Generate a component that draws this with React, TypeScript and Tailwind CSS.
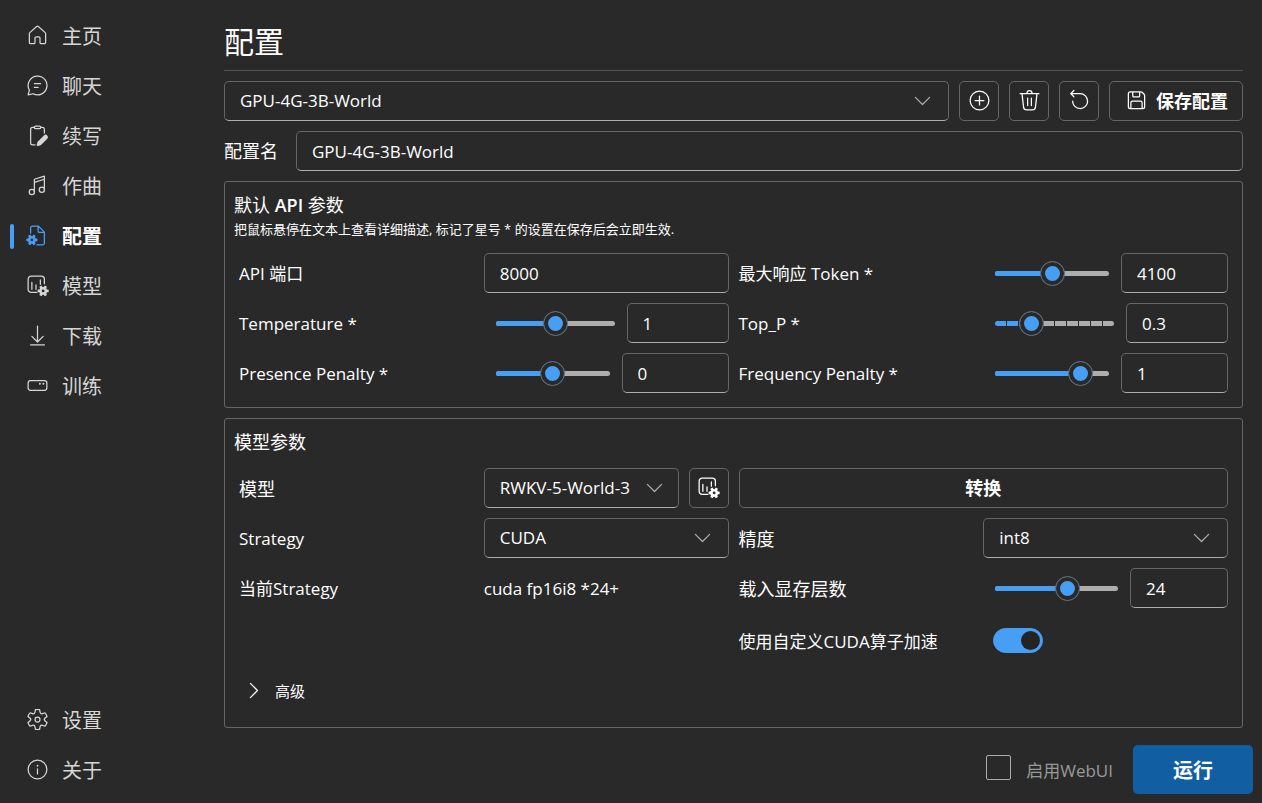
import { useState, type ReactNode } from "react";

type IconProps = { className?: string };

function Icon({ children, className = "" }: { children: ReactNode; className?: string }) {
  return (
    <svg viewBox="0 0 20 20" aria-hidden="true" className={`mb-px size-[25px] shrink-0 ${className}`}>
      {children}
    </svg>
  );
}

function Lines({ d }: { d: string }) {
  return <path d={d} fill="none" stroke="currentColor" strokeLinecap="round" strokeLinejoin="round" />;
}

function SmallGear({ x, y }: { x: number; y: number }) {
  return (
    <g transform={`translate(${x} ${y})`}>
      {[0, 60, 120].map((angle) => (
        <rect key={angle} x="-1.1" y="-4.4" width="2.2" height="8.8" rx="0.5" fill="currentColor" transform={`rotate(${angle + 30})`} />
      ))}
      <circle r="2.1" fill="none" stroke="currentColor" strokeWidth="2" />
      <circle r="1.1" fill="#292929" />
    </g>
  );
}

const HomeIcon = (p: IconProps) => (
  <Icon {...p}>
    <path
      fill="currentColor"
      d="M9 2.39a1.5 1.5 0 0 1 2 0l5.5 4.94c.32.28.5.69.5 1.12v7.05c0 .83-.67 1.5-1.5 1.5H13a1.5 1.5 0 0 1-1.5-1.5V12a.5.5 0 0 0-.5-.5H9a.5.5 0 0 0-.5.5v3.5c0 .83-.67 1.5-1.5 1.5H4.5A1.5 1.5 0 0 1 3 15.5V8.45c0-.43.18-.84.5-1.12L9 2.39Zm1.33.74a.5.5 0 0 0-.66 0l-5.5 4.94a.5.5 0 0 0-.17.38v7.05c0 .28.22.5.5.5H7a.5.5 0 0 0 .5-.5V12c0-.83.67-1.5 1.5-1.5h2c.83 0 1.5.67 1.5 1.5v3.5c0 .28.22.5.5.5h2.5a.5.5 0 0 0 .5-.5V8.45a.5.5 0 0 0-.17-.38l-5.5-4.94Z"
    />
  </Icon>
);

const ChatIcon = (p: IconProps) => (
  <Icon {...p}>
    <Lines d="M10 2.5a7.5 7.5 0 1 1-3.5 14.1l-4 .9 1-3.8A7.5 7.5 0 0 1 10 2.5ZM7.5 8.5h5M7.5 11.5h3" />
  </Icon>
);

const ClipboardEditIcon = (p: IconProps) => (
  <Icon {...p}>
    <Lines d="M7.5 3.5H6A1.5 1.5 0 0 0 4.5 5v11A1.5 1.5 0 0 0 6 17.5h2M12.5 3.5H14A1.5 1.5 0 0 1 15.5 5v3" />
    <rect x="7.5" y="2.5" width="5" height="2" rx="1" fill="none" stroke="currentColor" />
    <path
      fill="currentColor"
      d="m10.3 14.7 4.8-4.8a1.87 1.87 0 0 1 2.7 2.7l-4.8 4.8c-.3.3-.6.5-1 .6l-1.5.4a.9.9 0 0 1-1.1-1.1l.4-1.5c.1-.4.2-.8.5-1.1Z"
    />
  </Icon>
);

const MusicIcon = (p: IconProps) => (
  <Icon {...p}>
    <Lines d="M7.5 15V5l8-2.5v10.7M7.5 7.5l8-2.5" />
    <circle cx="5.5" cy="15.2" r="2.1" fill="none" stroke="currentColor" />
    <circle cx="13.5" cy="13.3" r="2.1" fill="none" stroke="currentColor" />
  </Icon>
);

const DocumentSettingsIcon = (p: IconProps) => (
  <Icon {...p}>
    <Lines d="M4.5 8V4A1.5 1.5 0 0 1 6 2.5h4.7L15.5 7.3V16a1.5 1.5 0 0 1-1.5 1.5h-4.5M10.5 2.5V6.5a1 1 0 0 0 1 1h4" />
    <SmallGear x={5.5} y={13.5} />
  </Icon>
);

const DataSettingsIcon = (p: IconProps) => (
  <Icon {...p}>
    <Lines d="M9.5 15.5H5A2.5 2.5 0 0 1 2.5 13V5A2.5 2.5 0 0 1 5 2.5h8A2.5 2.5 0 0 1 15.5 5v3.5M5.5 7.5V13M8.8 9.5V13M12.3 5.5v3.5" />
    <SmallGear x={14.5} y={14.3} />
  </Icon>
);

const DownloadIcon = (p: IconProps) => (
  <Icon {...p}>
    <Lines d="M4.5 17.5h11M10 2.5V15M5.5 10.7 10 15.2l4.5-4.5" />
  </Icon>
);

const DriveIcon = (p: IconProps) => (
  <Icon {...p}>
    <rect x="2.5" y="6" width="15" height="7.8" rx="2" fill="none" stroke="currentColor" />
    <circle cx="11.9" cy="8.6" r="0.8" fill="currentColor" />
    <circle cx="14.7" cy="8.6" r="0.8" fill="currentColor" />
  </Icon>
);

const SettingsIcon = (p: IconProps) => (
  <Icon {...p}>
    <path
      fill="currentColor"
      d="M1.91 7.38A8.5 8.5 0 0 1 3.7 4.3a.5.5 0 0 1 .54-.13l1.92.68a1 1 0 0 0 1.32-.76l.36-2a.5.5 0 0 1 .4-.4 8.53 8.53 0 0 1 3.55 0c.2.04.35.2.38.4l.37 2a1 1 0 0 0 1.32.76l1.92-.68a.5.5 0 0 1 .54.13 8.5 8.5 0 0 1 1.78 3.08c.06.2 0 .4-.15.54l-1.56 1.32a1 1 0 0 0 0 1.52l1.56 1.32a.5.5 0 0 1 .15.54 8.5 8.5 0 0 1-1.78 3.08.5.5 0 0 1-.54.13l-1.92-.68a1 1 0 0 0-1.32.76l-.37 2a.5.5 0 0 1-.38.4 8.53 8.53 0 0 1-3.56 0 .5.5 0 0 1-.39-.4l-.36-2a1 1 0 0 0-1.32-.76l-1.92.68a.5.5 0 0 1-.54-.13 8.5 8.5 0 0 1-1.78-3.08.5.5 0 0 1 .15-.54l1.56-1.32a1 1 0 0 0 0-1.52L2.06 7.92a.5.5 0 0 1-.15-.54Zm1.06 0 1.3 1.1a2 2 0 0 1 0 3.04l-1.3 1.1c.3.79.72 1.51 1.25 2.16l1.6-.58a2 2 0 0 1 2.63 1.53l.3 1.67a7.56 7.56 0 0 0 2.5 0l.3-1.67a2 2 0 0 1 2.64-1.53l1.6.57a7.5 7.5 0 0 0 1.24-2.15l-1.3-1.1a2 2 0 0 1 0-3.05l1.3-1.1a7.5 7.5 0 0 0-1.25-2.15l-1.6.57a2 2 0 0 1-2.63-1.52l-.3-1.68a7.55 7.55 0 0 0-2.5 0l-.3 1.68A2 2 0 0 1 5.81 5.8l-1.6-.57a7.5 7.5 0 0 0-1.24 2.15ZM7.5 10a2.5 2.5 0 1 1 5 0 2.5 2.5 0 0 1-5 0Zm1 0a1.5 1.5 0 1 0 3 0 1.5 1.5 0 0 0-3 0Z"
    />
  </Icon>
);

const InfoIcon = (p: IconProps) => (
  <Icon {...p}>
    <circle cx="10" cy="10" r="7.5" fill="none" stroke="currentColor" />
    <Lines d="M10 9.5v4" />
    <circle cx="10" cy="7" r="0.75" fill="currentColor" />
  </Icon>
);

const AddIcon = (p: IconProps) => (
  <Icon {...p}>
    <circle cx="10" cy="10" r="7.5" fill="none" stroke="currentColor" />
    <Lines d="M10 6.5v7M6.5 10h7" />
  </Icon>
);

const DeleteIcon = (p: IconProps) => (
  <Icon {...p}>
    <path
      fill="currentColor"
      d="M8.5 4h3a1.5 1.5 0 0 0-3 0Zm-1 0a2.5 2.5 0 0 1 5 0h5a.5.5 0 0 1 0 1h-1.05l-1.2 10.34A3 3 0 0 1 12.27 18H7.73a3 3 0 0 1-2.98-2.66L3.55 5H2.5a.5.5 0 0 1 0-1h5ZM5.74 15.23A2 2 0 0 0 7.73 17h4.54a2 2 0 0 0 1.99-1.77L15.44 5H4.56l1.18 10.23ZM8.5 7.5c.28 0 .5.22.5.5v6a.5.5 0 0 1-1 0V8c0-.28.22-.5.5-.5ZM12 8a.5.5 0 0 0-1 0v6a.5.5 0 0 0 1 0V8Z"
    />
  </Icon>
);

const ResetIcon = (p: IconProps) => (
  <Icon {...p}>
    <Lines d="M3 4.5h7.5a6 6 0 1 1-6 6M5.5 2 3 4.5 5.5 7" />
  </Icon>
);

const SaveIcon = (p: IconProps) => (
  <Icon {...p}>
    <Lines d="M5 3h8.4a1.5 1.5 0 0 1 1.06.44l1.6 1.6a1.5 1.5 0 0 1 .44 1.06V15a1.5 1.5 0 0 1-1.5 1.5H5A1.5 1.5 0 0 1 3.5 15V4.5A1.5 1.5 0 0 1 5 3ZM7 3v3.3a.7.7 0 0 0 .7.7h4.1a.7.7 0 0 0 .7-.7V3M5.5 16.5v-4.8a1.2 1.2 0 0 1 1.2-1.2h6.6a1.2 1.2 0 0 1 1.2 1.2v4.8" />
  </Icon>
);

const ChevronIcon = (p: IconProps) => (
  <Icon {...p}>
    <Lines d="m4.3 7.5 5.7 5.7 5.7-5.7" />
  </Icon>
);

type NavItem = { name: string; icon: (p: IconProps) => ReactNode; active?: boolean };

const mainLinks: NavItem[] = [
  { name: "主页", icon: HomeIcon },
  { name: "聊天", icon: ChatIcon },
  { name: "续写", icon: ClipboardEditIcon },
  { name: "作曲", icon: MusicIcon },
  { name: "配置", icon: DocumentSettingsIcon, active: true },
  { name: "模型", icon: DataSettingsIcon },
  { name: "下载", icon: DownloadIcon },
  { name: "训练", icon: DriveIcon },
];

const footLinks: NavItem[] = [
  { name: "设置", icon: SettingsIcon },
  { name: "关于", icon: InfoIcon },
];

function NavList({ items }: { items: NavItem[] }) {
  return (
    <ul>
      {items.map(({ name, icon: Glyph, active }) => (
        <li key={name}>
          <a
            href="#"
            aria-current={active ? "page" : undefined}
            className={`flex h-[50px] items-center text-xl ${active ? "font-bold text-white" : "text-[#d6d6d6]"}`}
          >
            <span className={`h-[25px] w-1 rounded-full ${active ? "bg-[#479ef5]" : ""}`} />
            <Glyph className={`mr-3 ml-[11px] ${active ? "text-[#479ef5]" : ""}`} />
            <span className="pt-0.5">{name}</span>
          </a>
        </li>
      ))}
    </ul>
  );
}

const fieldBox = "h-10 w-full rounded-[5px] border border-[#666] border-b-[#adadad] bg-transparent pl-[15px] text-[17px] text-white outline-none";
const buttonBox = "flex h-10 items-center justify-center rounded-[5px] border border-[#666] text-white";

function Picker({ id, value, label, tight }: { id: string; value: string; label?: string; tight?: boolean }) {
  return (
    <div className="relative min-w-0 flex-1">
      <select id={id} aria-label={label} className={`${fieldBox} appearance-none`}>
        <option>{value}</option>
      </select>
      <ChevronIcon className={`pointer-events-none absolute top-[7px] text-[#adadad] ${tight ? "right-3" : "right-3.5"}`} />
    </div>
  );
}

function Row({ id, label, children }: { id?: string; label: string; children: ReactNode }) {
  const size = /[A-Za-z]/.test(label) ? "text-[17px]" : "text-lg";
  return (
    <div className="grid min-h-10 grid-cols-2 items-center">
      {id ? (
        <label htmlFor={id} className={`pt-0.5 leading-6 whitespace-nowrap ${size}`}>
          {label}
        </label>
      ) : (
        <span className={`pt-0.5 leading-6 whitespace-nowrap ${size}`}>{label}</span>
      )}
      <div className="flex min-w-0 items-center gap-2.5">{children}</div>
    </div>
  );
}

type SliderProps = {
  id: string;
  label: string;
  min: number;
  max: number;
  step: number;
  initial: number;
  box: string;
  segments?: number;
};

function SliderRow({ id, label, min, max, step, initial, box, segments = 1 }: SliderProps) {
  const [value, setValue] = useState(initial);
  const percent = ((value - min) / (max - min)) * 100;
  return (
    <Row id={id} label={label}>
      <div className="flex min-w-0 flex-1 items-center">
        <div className="relative flex h-[25px] min-w-0 flex-1 items-center px-3">
          <div className="flex h-[5px] flex-1 gap-px overflow-hidden rounded-full">
            {Array.from({ length: segments }, (_, i) => {
              const fill = Math.min(100, Math.max(0, percent * segments - i * 100));
              return (
                <div key={i} className="flex-1 bg-[#adadad]">
                  <div className="h-full bg-[#479ef5]" style={{ width: `${fill}%` }} />
                </div>
              );
            })}
          </div>
          <input
            type="range"
            aria-label={label}
            min={min}
            max={max}
            step={step}
            value={value}
            onChange={(e) => setValue(Number(e.target.value))}
            className="absolute inset-0 w-full appearance-none bg-transparent [&::-webkit-slider-thumb]:size-[25px] [&::-webkit-slider-thumb]:appearance-none [&::-webkit-slider-thumb]:rounded-full [&::-webkit-slider-thumb]:border [&::-webkit-slider-thumb]:border-[#666] [&::-webkit-slider-thumb]:bg-[#479ef5] [&::-webkit-slider-thumb]:shadow-[inset_0_0_0_4px_#292929]"
          />
        </div>
        <div className={`shrink-0 ${box}`}>
          <input id={id} value={value} onChange={(e) => setValue(Number(e.target.value) || 0)} className={fieldBox} />
        </div>
      </div>
    </Row>
  );
}

export default function App() {
  const [name, setName] = useState("GPU-4G-3B-World");
  const [port, setPort] = useState("8000");
  const [kernel, setKernel] = useState(true);

  return (
    <div
      lang="zh-CN"
      className="flex min-h-screen bg-[#292929] font-['Open_Sans','Noto_Sans_CJK_SC',sans-serif] leading-6 text-white"
    >
      <nav className="flex w-56 shrink-0 flex-col justify-between pt-[11px] pb-2 pl-2.5">
        <NavList items={mainLinks} />
        <NavList items={footLinks} />
      </nav>

      <main className="flex min-w-0 flex-1 flex-col pt-5 pr-[9px] pb-[9px]">
        <div className="flex flex-col gap-2.5 pr-2.5">
          <h1 className="border-b border-[#525252] pt-0.5 pb-2 text-3xl leading-10">配置</h1>

          <div className="flex gap-2.5">
            <Picker id="profile" value="GPU-4G-3B-World" label="配置" />
            <button aria-label="新建配置" className={`${buttonBox} w-10`}>
              <AddIcon />
            </button>
            <button aria-label="删除配置" className={`${buttonBox} w-10`}>
              <DeleteIcon />
            </button>
            <button aria-label="重置配置" className={`${buttonBox} w-10`}>
              <ResetIcon />
            </button>
            <button className={`${buttonBox} gap-[7px] px-3.5 text-lg font-bold`}>
              <SaveIcon />
              保存配置
            </button>
          </div>

          <div className="flex items-center">
            <label htmlFor="name" className="w-[72px] shrink-0 text-lg">
              配置名
            </label>
            <input id="name" value={name} onChange={(e) => setName(e.target.value)} className={fieldBox} />
          </div>

          <section className="rounded-[3px] border border-[#666] pt-[11px] pb-3.5">
            <h2 className="px-[9px] text-lg leading-6">
              默认 <b className="font-semibold">API</b> 参数
            </h2>
            <p className="mt-1 mb-4 px-[9px] text-[13px] leading-4">
              把鼠标悬停在文本上查看详细描述, 标记了星号 * 的设置在保存后会立即生效.
            </p>
            <div className="grid grid-cols-2 gap-2.5 px-3.5">
              <Row id="port" label="API 端口">
                <input id="port" value={port} onChange={(e) => setPort(e.target.value)} className={fieldBox} />
              </Row>
              <SliderRow id="tokens" label="最大响应 Token *" min={100} max={8100} step={100} initial={4100} box="w-[107px]" />
              <SliderRow id="temperature" label="Temperature *" min={0} max={2} step={0.1} initial={1} box="w-[102px]" />
              <SliderRow id="topp" label="Top_P *" min={0} max={1} step={0.1} initial={0.3} box="w-[102px]" segments={10} />
              <SliderRow id="presence" label="Presence Penalty *" min={-2} max={2} step={0.1} initial={0} box="w-[107px]" />
              <SliderRow id="frequency" label="Frequency Penalty *" min={-2} max={2} step={0.1} initial={1} box="w-[107px]" />
            </div>
          </section>

          <section className="rounded-[3px] border border-[#666] pt-[11px] pb-3.5">
            <h2 className="mb-3.5 px-[9px] text-lg leading-6">模型参数</h2>
            <div className="grid grid-cols-2 gap-2.5 px-3.5">
              <Row id="model" label="模型">
                <Picker id="model" value="RWKV-5-World-3" tight />
                <button aria-label="管理模型" className={`${buttonBox} w-10 shrink-0`}>
                  <DataSettingsIcon />
                </button>
              </Row>
              <button className={`${buttonBox} text-lg font-bold`}>转换</button>
              <Row id="strategy" label="Strategy">
                <Picker id="strategy" value="CUDA" />
              </Row>
              <Row id="precision" label="精度">
                <Picker id="precision" value="int8" />
              </Row>
              <Row label="当前Strategy">
                <span className="pt-0.5 text-[17px]">cuda fp16i8 *24+</span>
              </Row>
              <SliderRow id="layers" label="载入显存层数" min={0} max={41} step={1} initial={24} box="w-[98px]" />
              <div className="col-start-2">
                <Row id="kernel" label="使用自定义CUDA算子加速">
                  <div className="p-2.5">
                    <input
                      id="kernel"
                      type="checkbox"
                      role="switch"
                      checked={kernel}
                      onChange={(e) => setKernel(e.target.checked)}
                      className="flex h-[25px] w-[50px] appearance-none items-center rounded-full border border-[#adadad] px-[2px] before:size-[19px] before:rounded-full before:bg-[#adadad] checked:justify-end checked:border-[#479ef5] checked:bg-[#479ef5] checked:before:bg-[#242424]"
                    />
                  </div>
                </Row>
              </div>
            </div>
            <button aria-expanded="false" className="mt-2 mb-0.5 ml-4 flex h-10 items-center gap-[9px] text-[15px]">
              <ChevronIcon className="-rotate-90" />
              高级
            </button>
          </section>
        </div>

        <div className="mt-auto flex items-center justify-end pt-4">
          <label className="mr-5 flex items-center gap-[15px] text-[17px] text-[#999]">
            <input type="checkbox" className="mb-1 size-[25px] appearance-none rounded-[2px] border border-[#adadad] checked:bg-[#479ef5]" />
            <span className="pt-0.5">启用WebUI</span>
          </label>
          <button className="h-[49px] w-[120px] rounded-[5px] bg-[#115ea3] pt-0.5 text-xl font-bold text-white">运行</button>
        </div>
      </main>
    </div>
  );
}
